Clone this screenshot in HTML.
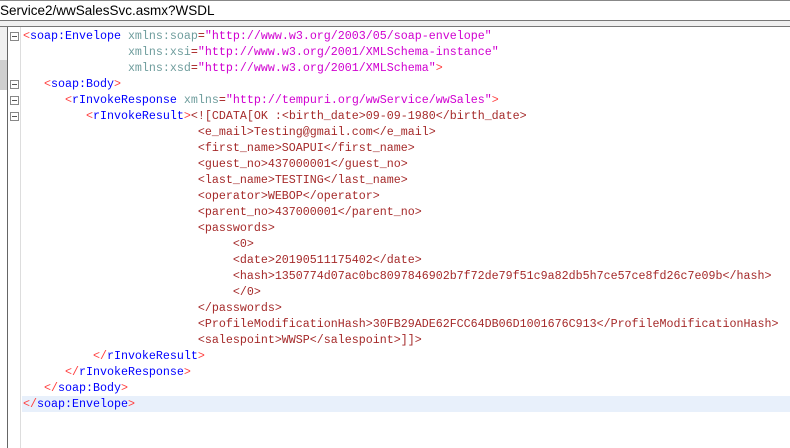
<!DOCTYPE html>
<html><head><meta charset="utf-8"><style>
html,body{margin:0;padding:0;width:790px;height:448px;overflow:hidden;background:#fff;position:relative}
.top{position:absolute;left:0;top:0;width:790px;height:20px;border-top:1px solid #888;background:#fff;font:13.5px "Liberation Sans",sans-serif;line-height:19px;color:#000;white-space:nowrap}
.bar{position:absolute;left:0;top:20px;width:790px;height:5px;border-top:1px solid #777;border-bottom:1px solid #777;background:#f0f0f0}
.strip{position:absolute;left:0;top:27px;width:7px;height:421px;background:#fff}
.strip .a{position:absolute;left:0;top:0;width:7px;height:33px;background:#f0f0f0}
.strip .b{position:absolute;left:0;top:33px;width:7px;height:30px;background:#cfcfcf}
.vl{position:absolute;left:7px;top:27px;width:1px;height:421px;background:#666}
.gl{position:absolute;left:20px;top:27px;width:1px;height:421px;background:#ddd}
.fold{position:absolute;left:10px;width:7px;height:7px;border:1px solid #888;background:#fff}
.fold:after{content:"";position:absolute;left:1px;top:3px;width:5px;height:1px;background:#555}
.hl{position:absolute;left:22px;top:396px;width:768px;height:16px;background:#e8f0fb}
pre{position:absolute;left:23px;top:28px;margin:0;font:11.67px "Liberation Mono",monospace;line-height:16px;color:#a31515;white-space:pre}
.k{color:#ff4040}.t{color:#0000ff}.n{color:#6f9d9d}.v{color:#d000d0}.c{color:#a52a2a}
</style></head><body>
<div class="top">Service2/wwSalesSvc.asmx?WSDL</div>
<div class="bar"></div>
<div class="strip"><div class="a"></div><div class="b"></div></div>
<div class="vl"></div><div class="gl"></div>
<div class="fold" style="top:32px"></div>
<div class="fold" style="top:80px"></div>
<div class="fold" style="top:96px"></div>
<div class="fold" style="top:112px"></div>
<div class="hl"></div>
<pre><span class="k">&lt;</span><span class="t">soap:Envelope</span> <span class="n">xmlns:soap</span>=<span class="v">"http://www.w3.org/2003/05/soap-envelope"</span>
               <span class="n">xmlns:xsi</span>=<span class="v">"http://www.w3.org/2001/XMLSchema-instance"</span>
               <span class="n">xmlns:xsd</span>=<span class="v">"http://www.w3.org/2001/XMLSchema"</span><span class="k">&gt;</span>
   <span class="k">&lt;</span><span class="t">soap:Body</span><span class="k">&gt;</span>
      <span class="k">&lt;</span><span class="t">rInvokeResponse</span> <span class="n">xmlns</span>=<span class="v">"http://tempuri.org/wwService/wwSales"</span><span class="k">&gt;</span>
         <span class="k">&lt;</span><span class="t">rInvokeResult</span><span class="k">&gt;</span><span class="c">&lt;![CDATA[OK :&lt;birth_date&gt;09-09-1980&lt;/birth_date&gt;</span>
<span class="c">                         &lt;e_mail&gt;Testing@gmail.com&lt;/e_mail&gt;</span>
<span class="c">                         &lt;first_name&gt;SOAPUI&lt;/first_name&gt;</span>
<span class="c">                         &lt;guest_no&gt;437000001&lt;/guest_no&gt;</span>
<span class="c">                         &lt;last_name&gt;TESTING&lt;/last_name&gt;</span>
<span class="c">                         &lt;operator&gt;WEBOP&lt;/operator&gt;</span>
<span class="c">                         &lt;parent_no&gt;437000001&lt;/parent_no&gt;</span>
<span class="c">                         &lt;passwords&gt;</span>
<span class="c">                              &lt;0&gt;</span>
<span class="c">                              &lt;date&gt;20190511175402&lt;/date&gt;</span>
<span class="c">                              &lt;hash&gt;1350774d07ac0bc8097846902b7f72de79f51c9a82db5h7ce57ce8fd26c7e09b&lt;/hash&gt;</span>
<span class="c">                              &lt;/0&gt;</span>
<span class="c">                         &lt;/passwords&gt;</span>
<span class="c">                         &lt;ProfileModificationHash&gt;30FB29ADE62FCC64DB06D1001676C913&lt;/ProfileModificationHash&gt;</span>
<span class="c">                         &lt;salespoint&gt;WWSP&lt;/salespoint&gt;]]&gt;</span>
          <span class="k">&lt;/</span><span class="t">rInvokeResult</span><span class="k">&gt;</span>
      <span class="k">&lt;/</span><span class="t">rInvokeResponse</span><span class="k">&gt;</span>
   <span class="k">&lt;/</span><span class="t">soap:Body</span><span class="k">&gt;</span>
<span class="k">&lt;/</span><span class="t">soap:Envelope</span><span class="k">&gt;</span></pre>
</body></html>
